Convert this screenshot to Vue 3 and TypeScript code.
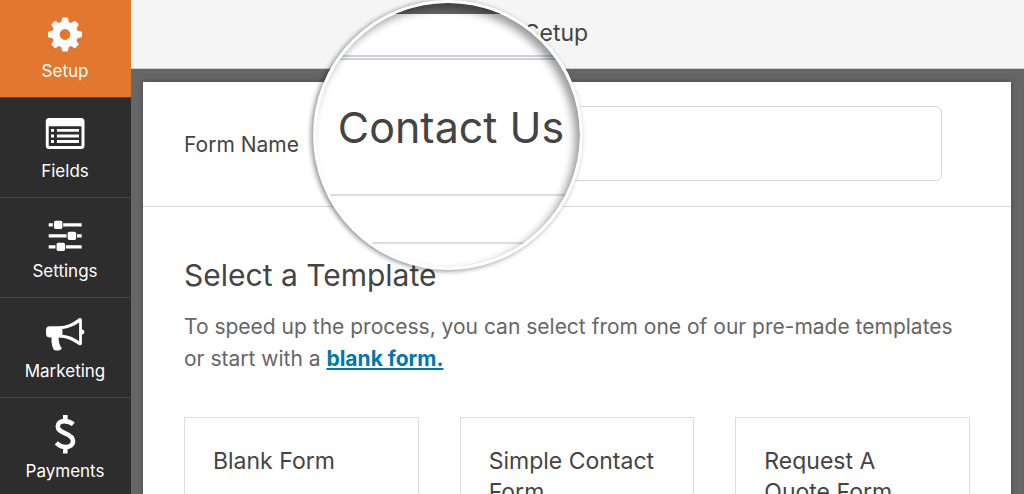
<script setup lang="ts">
import { ref } from 'vue'

type Icon = 'gear' | 'list' | 'sliders' | 'horn' | 'dollar'

interface Section {
  name: string
  icon: Icon
}

const sections: Section[] = [
  { name: 'Setup', icon: 'gear' },
  { name: 'Fields', icon: 'list' },
  { name: 'Settings', icon: 'sliders' },
  { name: 'Marketing', icon: 'horn' },
  { name: 'Payments', icon: 'dollar' },
]

const templates: string[] = ['Blank Form', 'Simple Contact Form', 'Request A Quote Form']

const teeth: number[] = [0, 45, 90, 135, 180, 225, 270, 315]

const active = ref('Setup')
const formName = ref('')
const magnifiedName = ref('Contact Us')
</script>

<template>
  <div class="builder">
    <nav class="sidebar" aria-label="Form builder sections">
      <button
        v-for="section in sections"
        :key="section.name"
        type="button"
        class="tab"
        :class="{ active: section.name === active }"
        @click="active = section.name"
      >
        <svg class="icon" viewBox="0 0 40 40" aria-hidden="true">
          <g v-if="section.icon === 'gear'" fill="currentColor">
            <path
              v-for="angle in teeth"
              :key="angle"
              d="M16 9 L17 4.500 Q17.200 3.600 18.100 3.600 H21.900 Q22.800 3.600 23 4.500 L24 9 V12 H16Z"
              :transform="`rotate(${angle} 20 20.500)`"
            />
            <circle cx="20" cy="20.500" r="9.200" fill="none" stroke="currentColor" stroke-width="7.600" />
          </g>
          <g v-else-if="section.icon === 'list'">
            <path
              fill="currentColor"
              fill-rule="evenodd"
              d="M4 4H36Q39.500 4 39.500 7.500V31.500Q39.500 35 36 35H4Q.8 35 .8 31.500V7.500Q.8 4 4 4ZM4.500 12.300Q3.700 12.300 3.700 13.100V31.300Q3.700 32.100 4.500 32.100H35.700Q36.500 32.100 36.500 31.300V13.100Q36.500 12.300 35.700 12.300Z"
            />
            <path
              fill="currentColor"
              d="M6 14.900H9V17.800H6ZM6 20.500H9V23.400H6ZM6 26.100H9V29H6ZM11.900 14.900H34V17.800H11.900ZM11.900 20.500H34V23.400H11.900ZM11.900 26.100H34V29H11.900Z"
            />
          </g>
          <g v-else-if="section.icon === 'sliders'" fill="currentColor">
            <path d="M3.700 9.200H7.800V12.400H3.700ZM18.200 9.200H36.700V12.400H18.200ZM3.700 20.200H21.600V23.400H3.700ZM32 20.200H36.700V23.400H32ZM3.700 31.200H10.500V34.400H3.700ZM20.800 31.200H36.700V34.400H20.800Z" />
            <rect x="9" y="6.700" width="8.400" height="8.200" rx="1.600" />
            <rect x="22.700" y="17.700" width="8.400" height="8.200" rx="1.600" />
            <rect x="11.600" y="28.700" width="8.400" height="8.200" rx="1.600" />
          </g>
          <g v-else-if="section.icon === 'horn'" fill="currentColor">
            <path d="M4.600 12.300H17V23.400H13.600C13.500 28 14.800 31.500 16.900 34.400C15.200 37 10 37.200 8.600 35.600C6.800 31.500 6.200 28 6.600 23.400H4.600Q1 23.200 1 19.700V15.900Q1 12.500 4.600 12.300Z" />
            <path
              fill-rule="evenodd"
              d="M14.800 12.300C22 12 29 8.500 34.400 4.100Q36.600 3.600 36.900 5.600V15.200Q39.400 15.900 39.400 18T36.900 20.800V29.700Q36.600 31.700 34.400 31.300C29 27.200 22 23.800 14.800 23.400ZM17.400 14.900V20.700C23.500 21.200 29 23.500 34.100 27.200V8.500C29 12 23.500 14.500 17.400 14.900Z"
            />
          </g>
          <path
            v-else
            fill="none"
            stroke="currentColor"
            stroke-width="4.600"
            d="M20.300 1V7M20.300 33V39.400M28.300 10.300C25.600 8.200 22.500 7.100 19.600 7.100C15.300 7.100 12.800 9.200 12.800 12.400C12.800 16 15.900 17.500 20.300 19.300C25.100 21.300 28 23.200 28 27C28 31 24.800 33.100 20.800 33.100C17.200 33.100 14 31.500 11.300 28.900"
          />
        </svg>
        <span class="tab-label">{{ section.name }}</span>
      </button>
    </nav>

    <div class="workspace">
      <header class="topbar">
        <h1 class="topbar-title">Setup</h1>
      </header>

      <main class="panel">
        <div class="name-row">
          <label class="name-label" for="form-name">Form Name</label>
          <input id="form-name" v-model="formName" class="name-input" type="text" />
        </div>

        <section class="templates">
          <h2 class="heading">Select a Template</h2>
          <p class="intro">
            To speed up the process, you can select from one of our pre-made templates or start
            with a <a class="blank-link" href="#blank">blank form.</a>
          </p>
          <div class="cards">
            <article v-for="template in templates" :key="template" class="card">
              <h3 class="card-title">{{ template }}</h3>
            </article>
          </div>
        </section>
      </main>
    </div>

    <div class="lens">
      <div class="lens-bar"></div>
      <input v-model="magnifiedName" class="lens-input" type="text" aria-label="Form name, magnified" />
      <div class="lens-rule"></div>
    </div>
  </div>
</template>

<style>
body {
  margin: 0;
  background: #666;
}
</style>

<style scoped>
.builder {
  position: relative;
  display: flex;
  height: 100vh;
  overflow: hidden;
  background: #666;
  color: #444;
  font-family: Inter, "Liberation Sans", sans-serif;
}

.builder * {
  box-sizing: border-box;
}

.sidebar {
  flex: none;
  width: 131px;
  background: #2d2d2d;
}

.tab {
  display: flex;
  flex-direction: column;
  align-items: center;
  gap: 5px;
  width: 100%;
  padding: 16px 1px 14px 0;
  border: 0;
  border-bottom: 1px solid #444;
  background: #2d2d2d;
  color: #fff;
  font: inherit;
  cursor: pointer;
}

.tab:first-child {
  padding-top: 14px;
}

.tab.active {
  background: #e27730;
}

.icon {
  display: block;
  width: 40px;
  height: 40px;
}

.tab-label {
  font-size: 17px;
  line-height: 24px;
}

.workspace {
  display: flex;
  flex: 1;
  flex-direction: column;
  min-width: 0;
}

.topbar {
  flex: none;
  padding: 15px 42px 17px 0;
  border-bottom: 1px solid #ccc;
  background: #f5f5f5;
  text-align: center;
}

.topbar-title {
  margin: 0;
  font-size: 23px;
  font-weight: 400;
  line-height: 36px;
}

.panel {
  flex: none;
  margin: 13px 13px 0 12px;
  background: #fff;
  box-shadow: 0 0 6px rgba(0, 0, 0, 0.3);
}

.name-row {
  display: flex;
  align-items: center;
  gap: 26px;
  padding: 24px 69px 25px 41px;
  border-bottom: 1px solid #d5d5d5;
}

.name-label {
  padding-top: 2px;
  font-size: 21px;
  line-height: 32px;
}

.name-input {
  flex: 1;
  min-width: 0;
  height: 75px;
  padding: 0 16px;
  border: 1px solid #d5d7d9;
  border-radius: 6px;
  background: #fff;
  color: inherit;
  font: inherit;
  font-size: 21px;
}

.templates {
  padding: 48px 41px;
}

.heading {
  margin: 0;
  font-size: 30px;
  font-weight: 400;
  line-height: 40px;
}

.intro {
  margin: 16px 0 42px;
  color: #666;
  font-size: 21px;
  line-height: 32px;
}

.blank-link {
  color: #0077ad;
  font-weight: 700;
  text-decoration: underline;
}

.cards {
  display: grid;
  grid-template-columns: repeat(3, 1fr);
  gap: 41px;
}

.card {
  min-height: 240px;
  padding: 28px;
  border: 1px solid #ddd;
}

.card-title {
  margin: 0;
  font-size: 23px;
  font-weight: 400;
  line-height: 31px;
}

.lens {
  position: absolute;
  top: 0;
  left: 313px;
  display: flex;
  flex-direction: column;
  width: 270px;
  height: 270px;
  overflow: hidden;
  border: 3px solid #fff;
  border-radius: 50%;
  background: #fff;
  box-shadow: -2px 1px 5px rgba(0, 0, 0, 0.45);
}

.lens::after {
  position: absolute;
  inset: 0;
  border-radius: 50%;
  box-shadow: inset -5px 5px 9px rgba(0, 0, 0, 0.4);
  content: "";
  pointer-events: none;
}

.lens-bar {
  flex: none;
  height: 11px;
  margin-bottom: 41px;
  background: #666;
}

.lens-input {
  flex: none;
  width: 100%;
  height: 141px;
  padding: 0 0 0 6px;
  border: 0;
  border-top: 5px double #ccd2d8;
  border-bottom: 2px solid #ddd;
  background: #fff;
  color: #444;
  font: inherit;
  font-size: 43px;
  text-align: center;
}

.lens-rule {
  flex: none;
  height: 2px;
  margin-top: 46px;
  background: #ddd;
}
</style>
